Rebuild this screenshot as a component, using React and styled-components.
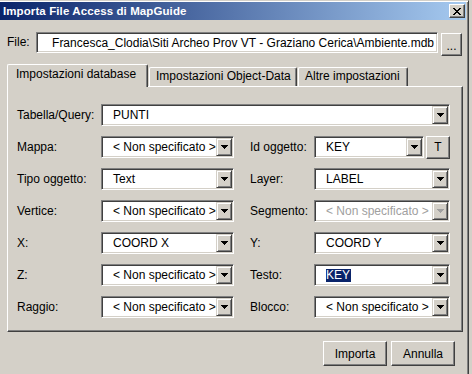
import React from "react";
import styled, { createGlobalStyle } from "styled-components";

const GlobalStyle = createGlobalStyle`
	html, body {
		margin: 0;
		padding: 0;
		background: #d4d0c8;
	}
	body {
		font-family: "Liberation Sans", Arial, sans-serif;
		font-size: 12px;
		color: #000;
	}
`;

const Window = styled.div`
	width: 469px;
	height: 374px;
	box-sizing: border-box;
	background: #d4d0c8;
	border-top: 1px solid #d4d0c8;
	border-right: 1px solid #404040;
	padding: 1px 2px 0 0;
	box-shadow: inset 0 1px 0 #fff, inset -1px 0 0 #808080;
	overflow: hidden;
`;

const TitleBar = styled.div`
	height: 18px;
	display: flex;
	align-items: center;
	justify-content: space-between;
	padding: 0 1px 0 3px;
	background: linear-gradient(to right, #0a246a, #a6caf0);
	color: #fff;
	font-weight: bold;
	font-size: 11.5px;
	letter-spacing: 0.1px;
`;

const CloseButton = styled.div`
	width: 16px;
	height: 14px;
	box-sizing: border-box;
	display: flex;
	align-items: center;
	justify-content: center;
	background: #d4d0c8;
	border: 1px solid;
	border-color: #fff #404040 #404040 #fff;
	box-shadow: inset -1px -1px 0 #808080;
`;

const Body = styled.div`
	padding: 0 3px 0 7px;
`;

const FileRow = styled.div`
	display: flex;
	align-items: flex-start;
	height: 24px;
	margin-top: 12px;
`;

const FileLabel = styled.span`
	width: 29px;
	line-height: 21px;
`;

const Sunken = styled.div`
	box-sizing: border-box;
	border: 1px solid;
	border-color: #808080 #fff #fff #808080;
	box-shadow: inset 1px 1px 0 #404040, inset -1px -1px 0 #d4d0c8;
	background: #fff;
`;

const FileField = styled(Sunken)`
	width: 402px;
	height: 21px;
	display: flex;
	justify-content: flex-end;
	align-items: center;
	overflow: hidden;
	white-space: nowrap;
	padding-right: 3px;
`;

const Button = styled.div`
	box-sizing: border-box;
	display: flex;
	align-items: ${p => (p.$low ? "flex-end" : "center")};
	justify-content: center;
	width: ${p => p.$w}px;
	height: ${p => p.$h}px;
	margin-left: ${p => p.$ml || 0}px;
	margin-top: ${p => p.$mt || 0}px;
	padding-bottom: ${p => (p.$low ? 3 : 0)}px;
	background: #d4d0c8;
	border: 1px solid;
	border-color: #fff #404040 #404040 #fff;
	box-shadow: inset -1px -1px 0 #808080;
	font-size: 12px;
	line-height: 12px;
`;

const TabRow = styled.div`
	display: flex;
	align-items: flex-end;
	height: 22px;
	margin-top: 8px;
`;

const Tab = styled.div`
	box-sizing: border-box;
	height: ${p => (p.$active ? 23 : 19)}px;
	width: ${p => p.$w}px;
	margin-right: 1px;
	margin-bottom: ${p => (p.$active ? -1 : 0)}px;
	position: relative;
	z-index: ${p => (p.$active ? 1 : 0)};
	background: #d4d0c8;
	border-left: 1px solid #fff;
	border-top: 1px solid #fff;
	border-right: 1px solid #404040;
	box-shadow: inset -1px 0 0 #808080;
	border-radius: 2px 2px 0 0;
	padding: ${p => (p.$active ? 2 : 1)}px 0 0 ${p => p.$pl}px;
	white-space: nowrap;
`;

const Panel = styled.div`
	box-sizing: border-box;
	width: 456px;
	height: 246px;
	border: 1px solid;
	border-color: #fff #404040 #404040 #fff;
	box-shadow: inset -1px -1px 0 #808080;
	padding: 17px 0 0 9px;
`;

const Form = styled.div`
	display: grid;
	grid-template-columns: 84px 133px 80px 136px;
	grid-auto-rows: 22px;
	row-gap: 10px;
	align-items: center;
`;

const Label = styled.span`
	padding-left: ${p => (p.$right ? 16 : 0)}px;
	white-space: nowrap;
`;

const Wide = styled.div`
	grid-column: ${p => (p.$span ? "2 / -1" : "auto")};
	display: flex;
	gap: 2px;
	align-items: center;
`;

const ComboBox = styled(Sunken)`
	height: 22px;
	flex: 1;
	display: flex;
	padding: 1px;
	min-width: 0;
`;

const ComboText = styled.div`
	flex: 1;
	min-width: 0;
	overflow: hidden;
	white-space: nowrap;
	padding-left: 10px;
	line-height: 18px;
	color: ${p => (p.$disabled ? "#a0a0a0" : "#000")};
`;

const Selected = styled.span`
	background: #0a246a;
	color: #fff;
	display: inline-block;
	line-height: 13px;
	padding-right: 1px;
`;

const Arrow = styled.div`
	box-sizing: border-box;
	width: 16px;
	flex: none;
	display: flex;
	align-items: center;
	justify-content: center;
	background: #d4d0c8;
	border: 1px solid;
	border-color: #d4d0c8 #404040 #404040 #d4d0c8;
	box-shadow: inset 1px 1px 0 #fff, inset -1px -1px 0 #808080;
`;

const Footer = styled.div`
	display: flex;
	justify-content: flex-end;
	gap: 4px;
	padding-right: 8px;
	margin-top: 9px;
`;

function Triangle({ color }) {
	return (
		<svg width="7" height="4" viewBox="0 0 7 4" shapeRendering="crispEdges">
			<rect x="0" y="0" width="7" height="1" fill={color} />
			<rect x="1" y="1" width="5" height="1" fill={color} />
			<rect x="2" y="2" width="3" height="1" fill={color} />
			<rect x="3" y="3" width="1" height="1" fill={color} />
		</svg>
	);
}

function Combo({ value, disabled, selected }) {
	return (
		<ComboBox>
			<ComboText $disabled={disabled}>
				{selected ? <Selected>{value}</Selected> : value}
			</ComboText>
			<Arrow>
				<Triangle color={disabled ? "#a0a0a0" : "#000"} />
			</Arrow>
		</ComboBox>
	);
}

const NS = "< Non specificato >";

const rows = [
	["Mappa:", NS, "Id oggetto:", "KEY"],
	["Tipo oggetto:", "Text", "Layer:", "LABEL"],
	["Vertice:", NS, "Segmento:", NS],
	["X:", "COORD X", "Y:", "COORD Y"],
	["Z:", NS, "Testo:", "KEY"],
	["Raggio:", NS, "Blocco:", NS],
];

export default function App() {
	return (
		<>
			<GlobalStyle />
			<Window>
				<TitleBar>
					<span>Importa File Access di MapGuide</span>
					<CloseButton>
						<svg width="8" height="7" viewBox="0 0 8 7" shapeRendering="crispEdges">
							<path d="M0 0h2v1h1v1h2v-1h1v-1h2v1h-1v1h-1v1h-1v1h1v1h1v1h1v1h-2v-1h-1v-1h-2v1h-1v1h-2v-1h1v-1h1v-1h1v-1h-1v-1h-1v-1h-1z" fill="#000" />
						</svg>
					</CloseButton>
				</TitleBar>
				<Body>
					<FileRow>
						<FileLabel>File:</FileLabel>
						<FileField>Francesca_Clodia\Siti Archeo Prov VT - Graziano Cerica\Ambiente.mdb</FileField>
						<Button $w={21} $h={23} $ml={3} $mt={1} $low>...</Button>
					</FileRow>
					<TabRow>
						<Tab $active $w={141} $pl={8}>Impostazioni database</Tab>
						<Tab $w={148} $pl={6}>Impostazioni Object-Data</Tab>
						<Tab $w={110} $pl={6}>Altre impostazioni</Tab>
					</TabRow>
					<Panel>
						<Form>
							<Label>Tabella/Query:</Label>
							<Wide $span>
								<Combo value="PUNTI" />
							</Wide>
							{rows.map(([l1, v1, l2, v2], i) => (
								<React.Fragment key={l1}>
									<Label>{l1}</Label>
									<Combo value={v1} />
									<Label $right>{l2}</Label>
									{i === 0 ? (
										<Wide>
											<Combo value={v2} />
											<Button $w={24} $h={23}>T</Button>
										</Wide>
									) : (
										<Combo value={v2} disabled={l2 === "Segmento:"} selected={l2 === "Testo:"} />
									)}
								</React.Fragment>
							))}
						</Form>
					</Panel>
					<Footer>
						<Button $w={64} $h={25}>Importa</Button>
						<Button $w={64} $h={25}>Annulla</Button>
					</Footer>
				</Body>
			</Window>
		</>
	);
}
